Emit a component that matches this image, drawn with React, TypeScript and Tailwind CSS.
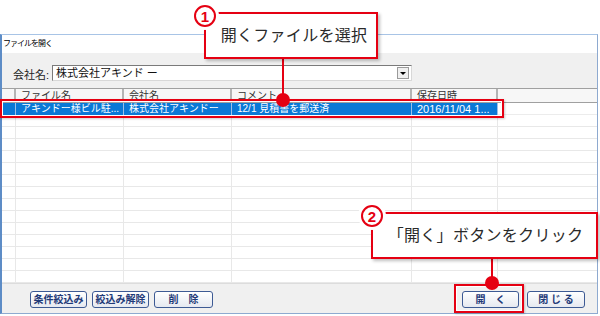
import React from "react";

const font = { fontFamily: '"Liberation Sans", "Noto Sans CJK JP", sans-serif' };

const columns = [
  { key: "mark", width: "w-[14px]" },
  { key: "name", width: "w-[108px]" },
  { key: "company", width: "w-[108px]" },
  { key: "comment", width: "w-[180px]" },
  { key: "date", width: "w-[86px]" },
];

const header = ["", "ファイル名", "会社名", "コメント", "保存日時"];
const selected = ["", "アキンドー様ビル駐...", "株式会社アキンドー", "12/1 見積書を郵送済", "2016/11/04 1..."];

function Button({ label, className = "" }: { label: string; className?: string }) {
  return (
    <button
      className={`h-[17px] rounded-[3px] border-[1.5px] border-[#3d5a94] bg-gradient-to-b from-white to-[#e6e9f0] text-[10px] font-bold text-[#1f3a78] leading-none whitespace-pre ${className}`}
    >
      {label}
    </button>
  );
}

function Callout({
  num,
  text,
  className,
}: {
  num: string;
  text: string;
  className: string;
}) {
  return (
    <div
      className={`absolute flex items-center justify-center border-2 border-[#e50012] bg-white shadow-[2px_2px_3px_rgba(0,0,0,0.25)] ${className}`}
    >
      <span className="text-[16px] text-[#2a2a2a] tracking-[0.3px]">{text}</span>
      <div className="absolute -left-[12px] -top-[9px] flex h-[22px] w-[22px] items-center justify-center rounded-full border-2 border-[#e50012] bg-white text-[15px] font-bold leading-none text-[#e50012] shadow-[0_0_0_3px_white]">
        {num}
      </div>
    </div>
  );
}

export default function App() {
  const rows = Array.from({ length: 14 });

  return (
    <div className="relative h-[316px] w-[600px] overflow-hidden bg-white" style={font}>
      {/* ウィンドウ */}
      <div className="mt-[34px] flex h-[280px] w-[598px] flex-col border-t border-l-2 border-r border-b border-t-[#a8c4e6] border-l-[#5d8cc6] border-r-[#8eaad0] border-b-[#8eaad0]">
        <div className="flex h-[18px] items-center bg-white pl-[1px] text-[8px] tracking-[-1px] text-black">
          ファイルを開く
        </div>

        <div className="flex flex-1 flex-col bg-[#f0f0f0]">
          {/* 会社名 */}
          <div className="flex h-[35px] items-start pt-[12px]">
            <span className="ml-[11px] mt-[2px] w-[39px] text-[11px] text-[#222]">会社名:</span>
            <div className="flex h-[16px] w-[360px] items-center border border-t-[#7a7a7a] border-l-[#7a7a7a] border-r-[#d8d8d8] border-b-[#d8d8d8] bg-white pl-[3px]">
              <span className="flex-1 text-[11px] text-[#111]">株式会社アキンド ー</span>
              <div className="mr-[2px] flex h-[12px] w-[12px] items-center justify-center border border-[#9a9a9a] bg-[#f0f0f0]">
                <span className="block h-0 w-0 border-x-[3px] border-t-[3px] border-x-transparent border-t-black" />
              </div>
            </div>
          </div>

          {/* 一覧 */}
          <div className="flex h-[195px] flex-col bg-white">
            <div className="flex h-[15px] border-y border-y-[#a0a0a0] bg-[#f7f7f7]">
              {columns.map((c, i) => (
                <div
                  key={c.key}
                  className={`${c.width} border-r-2 border-r-[#b4b4b4] pl-[5px] pt-[1px] text-[10px] leading-[12px] text-[#333]`}
                >
                  {header[i]}
                </div>
              ))}
              <div className="flex-1" />
            </div>

            <div className="flex h-[12px] bg-white">
              {columns.map((c, i) => (
                <div
                  key={c.key}
                  className={`${c.width} border-r border-r-[#9fbfe6] bg-[#0a78d6] pl-[5px] text-[10px] leading-[12px] whitespace-nowrap overflow-hidden text-white ${i === 4 ? "text-[11px]" : ""}`}
                >
                  {selected[i]}
                </div>
              ))}
              <div className="flex-1 border-b border-b-[#ececec]" />
            </div>

            {rows.map((_, r) => (
              <div key={r} className="flex h-[12px]">
                {columns.map((c) => (
                  <div key={c.key} className={`${c.width} border-r border-b border-[#e8e8e8]`} />
                ))}
                <div className="flex-1 border-b border-[#e8e8e8]" />
              </div>
            ))}
          </div>

          {/* ボタン */}
          <div className="flex flex-1 items-start border-t border-t-[#dcdcdc] pt-[7px]">
            <div className="ml-[28px] flex gap-[5px]">
              <Button label="条件絞込み" className="w-[57px]" />
              <Button label="絞込み解除" className="w-[57px]" />
              <Button label="削　除" className="w-[59px]" />
            </div>
            <div className="ml-auto mr-[12px] flex gap-[8px]">
              <Button label="開　く" className="w-[57px]" />
              <Button label="閉 じ る" className="w-[58px]" />
            </div>
          </div>
        </div>
      </div>

      {/* 注釈 */}
      <div className="absolute left-0 top-[99px] h-[19px] w-[504px] border-2 border-[#e50012] shadow-[inset_0_0_0_1px_white,1px_1px_2px_rgba(0,0,0,0.2)]" />
      <div className="absolute left-[454px] top-[284px] h-[29px] w-[70px] border-2 border-[#e50012] shadow-[inset_0_0_0_1px_white,1px_1px_2px_rgba(0,0,0,0.2)]" />

      <div className="absolute left-[282px] top-[59px] h-[41px] w-[2px] bg-[#e50012]" />
      <div className="absolute left-[276px] top-[93px] h-[14px] w-[14px] rounded-full bg-[#e50012]" />
      <div className="absolute left-[491px] top-[258px] h-[25px] w-[2px] bg-[#e50012]" />
      <div className="absolute left-[485px] top-[276px] h-[14px] w-[14px] rounded-full bg-[#e50012]" />

      <Callout num="1" text="開くファイルを選択" className="left-[204px] top-[12px] h-[47px] w-[174px] pl-[6px]" />
      <Callout num="2" text="「開く」ボタンをクリック" className="left-[371px] top-[212px] h-[47px] w-[227px] pl-[2px]" />
    </div>
  );
}
